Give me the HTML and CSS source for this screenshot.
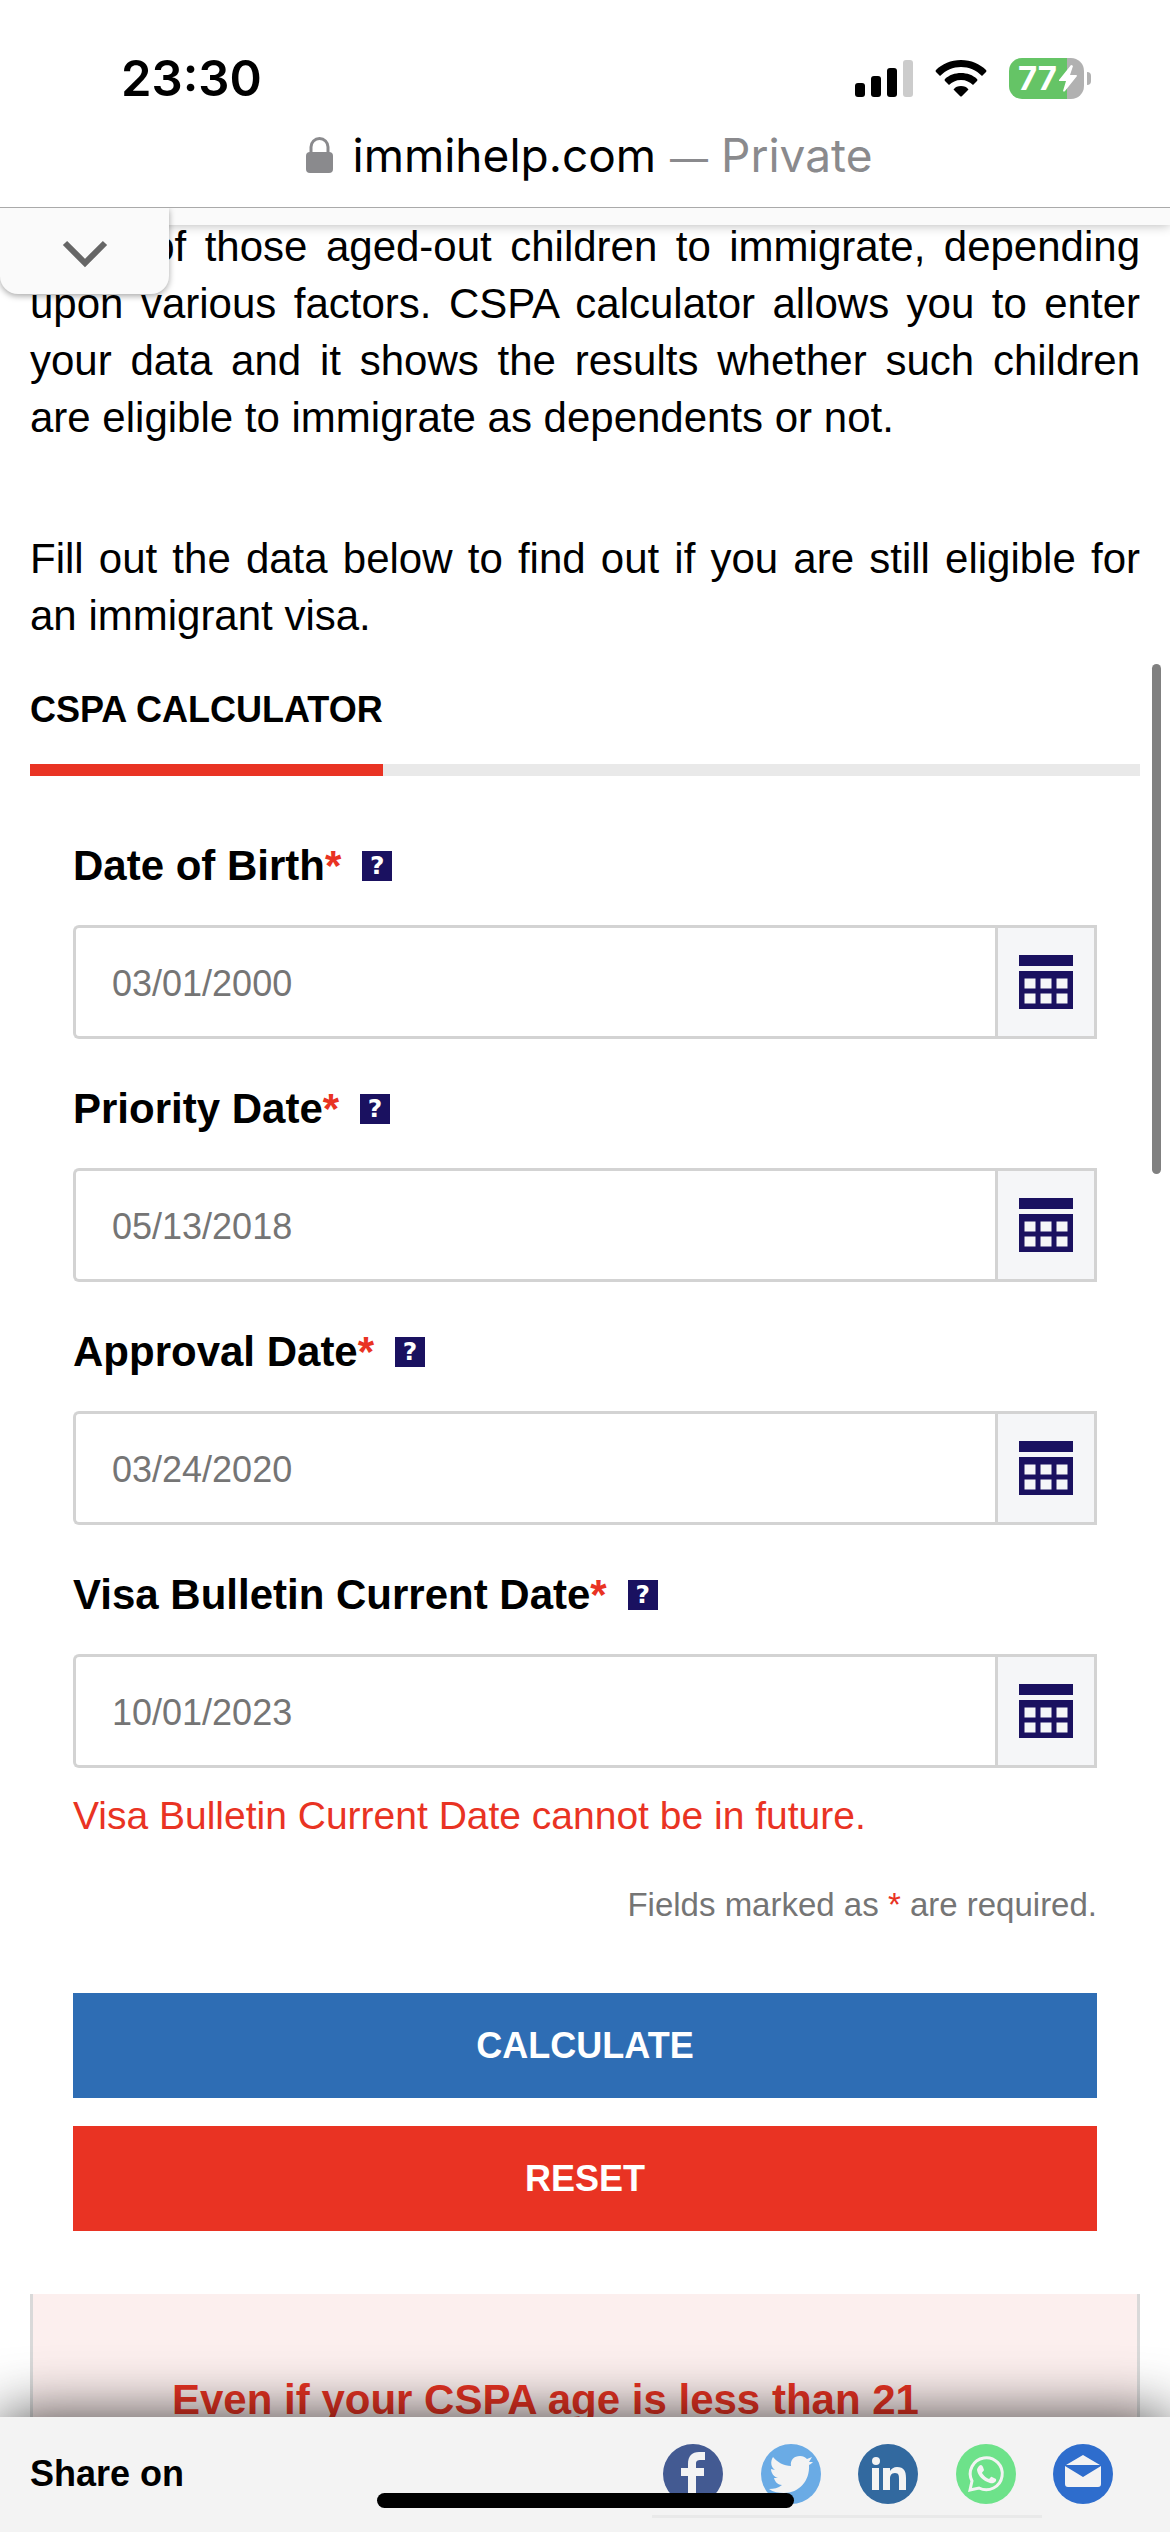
FILE: index.html
```html
<!DOCTYPE html>
<html lang="en">
<head>
<meta charset="utf-8">
<meta name="viewport" content="width=device-width, initial-scale=1">
<title>CSPA Calculator</title>
<link rel="stylesheet" href="styles.css">
</head>
<body>
<svg class="defs" aria-hidden="true">
  <symbol id="calendar" viewBox="0 0 54 54">
    <path fill="#1a1160" fill-rule="evenodd" d="M0 0h54v11H0zM0 16h54v38H0zM5.500 23.500h11v10h-11zM21.500 23.500h11v10h-11zM37.500 23.500h11v10h-11zM5.500 38.500h11v10h-11zM21.500 38.500h11v10h-11zM37.500 38.500h11v10h-11z"/>
  </symbol>
</svg>
<div class="app">
  <header class="browser">
    <div class="status">
      <span class="time">23:30</span>
      <div class="indicators">
        <svg width="58" height="38" viewBox="0 0 58 38" aria-label="Signal">
          <rect x="0" y="24" width="10" height="14" rx="3"/>
          <rect x="16" y="17" width="10" height="21" rx="3"/>
          <rect x="32" y="9" width="10" height="29" rx="3"/>
          <rect x="48" y="1" width="10" height="37" rx="3" fill="#ccc"/>
        </svg>
        <svg width="52" height="38" viewBox="0 0 52 38" aria-label="Wi-Fi">
          <path d="M26 1C16 1 7 5 1 11q-1 1 0 2l4 4C11 11 18 8 26 8s15 3 21 9l4-4q1-1 0-2C45 5 36 1 26 1z"/>
          <path d="M26 14c-6 0-12 2-16 6q-1 1 0 2l4 4c3-3 7-5 12-5s9 2 12 5l4-4q1-1 0-2c-4-4-10-6-16-6z"/>
          <path d="M26 27c-3 0-6 1-7 3q-1 1 0 1l6 6q1 1 2 0l6-6q1 0 0-1c-1-2-4-3-7-3z"/>
        </svg>
        <div class="battery">
          <span class="charge">77</span>
          <svg class="bolt" width="18" height="27" viewBox="0 0 18 27" aria-hidden="true"><path fill="#fff" d="M12 0 0 15q-1 1 1 1h6L4 26q1 1 2 0L18 11q0-1-1-1h-6l3-9q-1-1-2-1z"/></svg>
        </div>
      </div>
    </div>
    <div class="address">
      <svg width="27" height="36" viewBox="0 0 27 36" aria-hidden="true"><rect x="0" y="15" width="27" height="21" rx="4" fill="#8a8a8d"/><path d="M5 17V10a8 8 0 0 1 17 0v7" fill="none" stroke="#8a8a8d" stroke-width="3"/></svg>
      <span>immihelp.com</span>
      <span class="private"><span class="dash">—</span> Private</span>
    </div>
  </header>

  <main class="page">
    <div class="ad-strip"></div>
    <button class="ad-toggle" type="button" aria-label="Collapse">
      <svg width="46" height="28" viewBox="0 0 46 28" aria-hidden="true"><path d="M3 3l20 20L43 3" fill="none" stroke="#666" stroke-width="6"/></svg>
    </button>
    <div class="scroll-thumb"></div>

    <p class="intro">some of those aged-out children to immigrate, depending upon various factors. CSPA calculator allows you to enter your data and it shows the results whether such children are eligible to immigrate as dependents or not.</p>
    <p class="intro">Fill out the data below to find out if you are still eligible for an immigrant visa.</p>

    <div class="tabs"><h2 class="tab">CSPA CALCULATOR</h2></div>

    <form class="form">
      <div class="field">
        <div class="caption"><label for="dob">Date of Birth<span class="req">*</span></label><button class="help" type="button">?</button></div>
        <div class="control"><input id="dob" type="text" value="03/01/2000"><button class="pick" type="button" aria-label="Pick date of birth"><svg width="54" height="54"><use href="#calendar"/></svg></button></div>
      </div>
      <div class="field">
        <div class="caption"><label for="priority">Priority Date<span class="req">*</span></label><button class="help" type="button">?</button></div>
        <div class="control"><input id="priority" type="text" value="05/13/2018"><button class="pick" type="button" aria-label="Pick priority date"><svg width="54" height="54"><use href="#calendar"/></svg></button></div>
      </div>
      <div class="field">
        <div class="caption"><label for="approval">Approval Date<span class="req">*</span></label><button class="help" type="button">?</button></div>
        <div class="control"><input id="approval" type="text" value="03/24/2020"><button class="pick" type="button" aria-label="Pick approval date"><svg width="54" height="54"><use href="#calendar"/></svg></button></div>
      </div>
      <div class="field">
        <div class="caption"><label for="bulletin">Visa Bulletin Current Date<span class="req">*</span></label><button class="help" type="button">?</button></div>
        <div class="control"><input id="bulletin" type="text" value="10/01/2023" aria-describedby="bulletin-error"><button class="pick" type="button" aria-label="Pick visa bulletin date"><svg width="54" height="54"><use href="#calendar"/></svg></button></div>
        <p class="error" id="bulletin-error">Visa Bulletin Current Date cannot be in future.</p>
      </div>
      <p class="note">Fields marked as <span class="req">*</span> are required.</p>
      <div class="actions">
        <button class="action calculate" type="button">CALCULATE</button>
        <button class="action reset" type="reset">RESET</button>
      </div>
    </form>

    <section class="alert">Even if your CSPA age is less than 21</section>
  </main>

  <footer class="share">
    <span class="share-label">Share on</span>
    <nav class="networks">
      <a href="#facebook" aria-label="Facebook"><svg width="60" height="60" viewBox="0 0 60 60"><circle cx="30" cy="30" r="30" fill="#435a92"/><path fill="#f3f3f3" d="M25 56V32h-7v-8h7v-4c0-8 4-12 11-12h6v8h-4c-4 0-5 1-5 4v4h8v8h-8v24z"/></svg></a>
      <a href="#twitter" aria-label="Twitter"><svg width="60" height="60" viewBox="0 0 60 60"><circle cx="30" cy="30" r="30" fill="#6aabe5"/><path fill="#f3f3f3" d="M52 18c-1 1-2 2-4 3 1 16-10 28-25 28-5 0-11-1-15-4 5 0 9-1 13-4-4 0-7-3-8-7h4c-4-1-7-5-7-9l4 1c-4-3-5-8-2-13 4 5 11 9 18 9-1-6 3-10 9-10 3 0 5 1 7 3l5-2-3 5z"/></svg></a>
      <a href="#linkedin" aria-label="LinkedIn"><svg width="60" height="60" viewBox="0 0 60 60"><circle cx="30" cy="30" r="30" fill="#32699f"/><circle cx="18" cy="17" r="4" fill="#f3f3f3"/><path fill="#f3f3f3" d="M14 24h7v22h-7zM25 24h7v3c1-2 4-4 7-4 7 0 9 4 9 11v12h-7V35c0-3 0-6-4-6s-5 3-5 6v11h-7z"/></svg></a>
      <a href="#whatsapp" aria-label="WhatsApp"><svg width="60" height="60" viewBox="0 0 60 60"><circle cx="30" cy="30" r="30" fill="#6de28a"/><path d="M14 46l2-9a16 16 0 1 1 7 7z" fill="none" stroke="#f3f3f3" stroke-width="3"/><path fill="#f3f3f3" d="M23 22c2-2 3-1 4 1l1 3c0 1-2 2-2 3 2 3 4 5 7 6 1 0 2-3 3-2l4 2c1 3-3 5-6 4-7-2-12-7-13-13 0-1 1-3 2-4z"/></svg></a>
      <a href="#email" aria-label="Email"><svg width="60" height="60" viewBox="0 0 60 60"><circle cx="30" cy="30" r="30" fill="#2e6dcd"/><path fill="#f3f3f3" d="M30 11l17 10H13zM12 22l18 11 18-11v18q0 3-3 3H15q-3 0-3-3z"/></svg></a>
    </nav>
    <div class="share-rule"></div>
    <div class="home-indicator"></div>
  </footer>
</div>
</body>
</html>
```
FILE: styles.css
```css
* { box-sizing: border-box; }

body {
  margin: 0;
  background: #fff;
  color: #000;
  font-family: "Liberation Sans", Arial, sans-serif;
}

p, h2 { margin: 0; }

button {
  padding: 0;
  border: 0;
  font-family: inherit;
}

svg { display: block; }

.defs { position: absolute; width: 0; height: 0; }

.app {
  display: flex;
  flex-direction: column;
  height: 100vh;
}

/* Browser chrome */
.browser {
  position: relative;
  z-index: 2;
  padding-top: 46px;
  background: #fff;
  border-bottom: 1px solid #aaa;
  font-family: Inter, sans-serif;
}

.status {
  display: flex;
  align-items: center;
  justify-content: space-between;
  height: 64px;
  padding: 0 78px 0 121px;
}

.time { font-size: 49px; font-weight: 600; }

.indicators { display: flex; align-items: center; gap: 22px; }

.battery {
  position: relative;
  display: flex;
  align-items: center;
  gap: 2px;
  width: 75px;
  height: 41px;
  margin-right: 8px;
  padding-left: 9px;
  border-radius: 13px;
  background: linear-gradient(to right, #65c466 58px, #b1b1b1 58px);
}

.battery::after {
  content: "";
  position: absolute;
  left: 78px;
  top: 14px;
  width: 4px;
  height: 13px;
  border-radius: 0 4px 4px 0;
  background: #b1b1b1;
}

.charge { color: #fff; font-size: 33px; font-weight: 700; }

.address {
  display: flex;
  align-items: center;
  justify-content: center;
  height: 97px;
  padding: 0 0 8px 8px;
  font-size: 46px;
}

.address svg { margin-right: 20px; }

.private { margin-left: 14px; color: #8a8a8d; }

.dash { font-size: 38px; }

/* Page */
.page {
  position: relative;
  flex: 1;
  min-height: 0;
  overflow: hidden;
  padding: 10px 30px 0;
}

.ad-strip {
  position: absolute;
  top: 0;
  left: 0;
  right: 0;
  height: 17px;
  background: #fafafa;
  box-shadow: 0 0 12px rgba(0, 0, 0, 0.3);
}

.ad-toggle {
  position: absolute;
  top: 0;
  left: 0;
  display: flex;
  justify-content: center;
  width: 169px;
  height: 86px;
  padding-top: 32px;
  border-radius: 0 0 18px 18px;
  background: #fafafa;
  box-shadow: 0 2px 6px rgba(0, 0, 0, 0.35);
}

.scroll-thumb {
  position: absolute;
  top: 456px;
  right: 9px;
  width: 9px;
  height: 510px;
  border-radius: 5px;
  background: #808080;
}

.intro {
  font-size: 42px;
  line-height: 57px;
  text-align: justify;
}

.intro + .intro { margin-top: 84px; }

.tabs {
  display: flex;
  margin-top: 45px;
  box-shadow: inset 0 -12px #e9e9e9;
}

.tab {
  padding-bottom: 33px;
  border-bottom: 12px solid #e93323;
  font-size: 36px;
  line-height: 42px;
}

.form { padding: 66px 43px 0; }

.field + .field { margin-top: 46px; }

.caption {
  display: flex;
  align-items: center;
  gap: 21px;
  margin-bottom: 35px;
  font-size: 42px;
  font-weight: 700;
  line-height: 48px;
}

.req { color: #e93323; }

.help {
  width: 30px;
  height: 30px;
  background: #1a1160;
  color: #fff;
  font: 700 25px/30px "DejaVu Sans", sans-serif;
}

.control { display: flex; height: 114px; }

.control input {
  flex: 1;
  min-width: 0;
  padding: 3px 36px 0;
  border: 3px solid #d3d3d3;
  border-right: 0;
  border-radius: 6px 0 0 6px;
  background: #fff;
  color: #757575;
  font-family: inherit;
  font-size: 36px;
}

.pick {
  display: flex;
  align-items: center;
  justify-content: center;
  width: 102px;
  border: 3px solid #d3d3d3;
  background: #f5f6f8;
}

.error {
  margin-top: 25px;
  color: #e93323;
  font-size: 39px;
  line-height: 45px;
}

.note {
  margin-top: 47px;
  color: #757575;
  font-size: 33px;
  line-height: 39px;
  text-align: right;
}

.actions {
  display: flex;
  flex-direction: column;
  gap: 28px;
  margin-top: 69px;
}

.action {
  height: 105px;
  color: #fff;
  font-size: 36px;
  font-weight: 700;
}

.calculate { background: #2e6db4; }

.reset { background: #e93323; }

.alert {
  margin-top: 63px;
  padding: 77px 139px;
  border: solid #d9d9d9;
  border-width: 0 3px;
  background: #fcefee;
  color: #e93323;
  font-size: 42px;
  font-weight: 700;
  line-height: 57px;
}

/* Share bar */
.share {
  position: relative;
  display: flex;
  align-items: center;
  justify-content: space-between;
  height: 115px;
  padding: 0 57px 2px 30px;
  background: #f3f3f3;
  box-shadow: 0 0 60px rgba(0, 0, 0, 0.75);
}

.share-label { font-size: 36px; font-weight: 700; }

.networks {
  display: flex;
  justify-content: space-between;
  width: 450px;
}

.share-rule {
  position: absolute;
  right: 128px;
  bottom: 14px;
  width: 390px;
  height: 3px;
  background: #e9e9e9;
}

.home-indicator {
  position: absolute;
  left: 50%;
  bottom: 24px;
  width: 417px;
  height: 15px;
  margin-left: -208px;
  border-radius: 8px;
  background: #000;
}
```
